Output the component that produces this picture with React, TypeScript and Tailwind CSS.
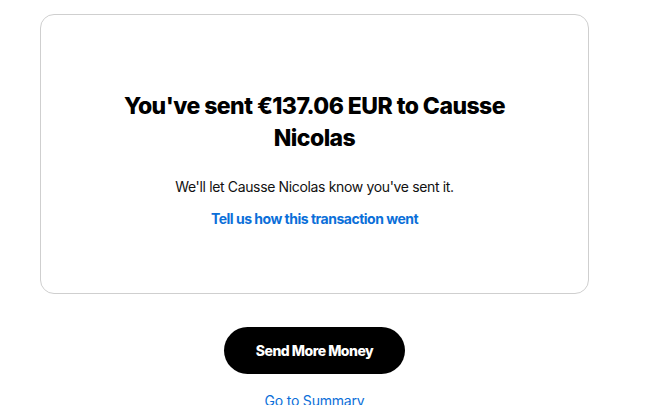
export default function App() {
  return (
    <div className="w-[629px] min-h-[405px] bg-white pt-[14px]" style={{ fontFamily: 'Inter, "Noto Sans", sans-serif' }}>
      <div className="mx-[40px] h-[280px] rounded-[14px] border border-[#cfcfcf] pt-[75px] flex flex-col items-center">
        <h1 className="max-w-[400px] text-center text-[23px] leading-[32px] font-extrabold tracking-[-0.55px] text-black">
          You've sent €137.06 EUR to Causse Nicolas
        </h1>
        <p className="mt-[23px] text-[14px] leading-[20px] text-[#111] tracking-[-0.35px]">
          We'll let Causse Nicolas know you've sent it.
        </p>
        <a className="mt-[12px] text-[14px] leading-[20px] font-bold text-[#0b6fd9] tracking-[-0.5px]">
          Tell us how this transaction went
        </a>
      </div>
      <div className="flex flex-col items-center">
        <button className="mt-[33px] w-[181px] h-[47px] rounded-full bg-black text-white text-[14px] font-extrabold tracking-[-0.5px]">
          Send More Money
        </button>
        <a className="mt-[17px] text-[14px] leading-[20px] text-[#0b6fd9] tracking-[-0.2px]">Go to Summary</a>
      </div>
    </div>
  );
}
